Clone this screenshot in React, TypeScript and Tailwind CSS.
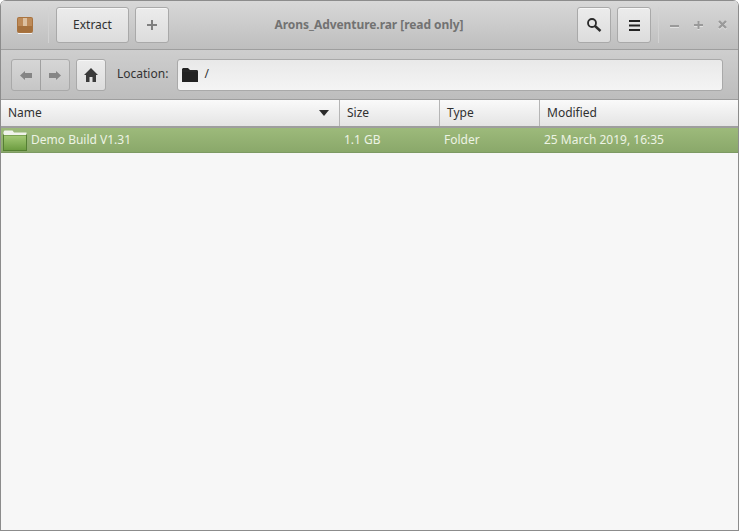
import React from 'react';

const font = { fontFamily: '"Noto Sans", sans-serif' };

const columns = [
  { label: 'Size', width: 'w-[100px]' },
  { label: 'Type', width: 'w-[100px]' },
  { label: 'Modified', width: 'flex-1' },
];

const btn =
  'flex items-center justify-center rounded-[3px] border border-[#a9a9a9] bg-gradient-to-b from-[#ececec] to-[#dcdcdc] shadow-[inset_0_1px_0_#f6f6f6]';

const ArchiveIcon = () => (
  <svg width="16" height="17" viewBox="0 0 16 17">
    <rect x="0" y="0" width="16" height="16" rx="2" fill="#a9733f" />
    <rect x="1" y="1" width="14" height="14" rx="1" fill="#bd8a58" />
    <rect x="1" y="9" width="14" height="6" fill="#a5703c" />
    <rect x="6" y="1" width="4" height="8" fill="#dcc0a0" />
    <rect x="1" y="16" width="14" height="1" fill="#f2f2f2" />
  </svg>
);

const FolderIcon = ({ fill }: { fill: string }) => (
  <svg width="16" height="14" viewBox="0 0 16 14">
    <path d="M0 1 1 0h5l2 2h7l1 1v11H0z" fill={fill} />
    <path d="M0 3h16" stroke="#3a3a3a" strokeWidth="0.500" />
  </svg>
);

const GreenFolder = () => (
  <svg width="24" height="21" viewBox="0 0 24 21">
    <defs>
      <linearGradient id="fg" x1="0" y1="0" x2="0" y2="1">
        <stop offset="0" stopColor="#a6cb78" />
        <stop offset="1" stopColor="#6b9b3f" />
      </linearGradient>
    </defs>
    <path d="M0.500 2 1.500 .5h8L11 2.500h12.500V6H.5z" fill="#f1f3ec" />
    <rect x="0.500" y="5" width="23" height="15.500" fill="url(#fg)" stroke="#557f33" />
    <rect x="1" y="4" width="22" height="1" fill="#f1f3ec" />
  </svg>
);

const WindowGlyph = ({ d, width = 2 }: { d: string; width?: number }) => (
  <svg width="10" height="11" viewBox="0 0 10 11" fill="none" strokeWidth={width}>
    <path d={d} transform="translate(0 1)" stroke="#e2e2e2" />
    <path d={d} stroke="#9a9a9a" />
  </svg>
);

export default function App() {
  return (
    <div
      style={font}
      className="flex h-[531px] w-[739px] flex-col overflow-hidden rounded-t-[6px] border border-t-0 border-[#8c8c8c] bg-[#f7f7f7] text-[12px] text-[#303030]"
    >
      {/* title bar */}
      <div className="flex h-[50px] shrink-0 items-center border-b border-[#9e9e9e] border-t border-t-[#8c8c8c] bg-gradient-to-b from-[#d8d8d8] to-[#bebebe] pl-[16px] pr-[10px]">
        <ArchiveIcon />
        <div className="ml-[15px] h-[36px] w-px bg-[#d2d2d2]" />
        <button className={`${btn} ml-[7px] h-[36px] w-[73px]`}>Extract</button>
        <button className={`${btn} ml-[6px] h-[36px] w-[34px]`}>
          <svg width="12" height="12" viewBox="0 0 12 12">
            <path d="M5 1h2v4h4v2H7v4H5V7H1V5h4z" fill="#808080" />
          </svg>
        </button>
        <div className="flex-1 pb-[1px] pr-[8px] text-center text-[12px] font-bold tracking-[-0.06px] text-[#727272]">
          Arons_Adventure.rar [read only]
        </div>
        <button className={`${btn} h-[36px] w-[34px]`}>
          <svg width="16" height="16" viewBox="0 0 16 16" fill="none" stroke="#2b2b2b">
            <circle cx="6" cy="6" r="4" strokeWidth="1.800" />
            <path d="M9 9l5.500 5" strokeWidth="2.400" />
          </svg>
        </button>
        <button className={`${btn} ml-[6px] h-[36px] w-[34px]`}>
          <svg width="11" height="11" viewBox="0 0 11 11" fill="#232323">
            <rect width="11" height="2" />
            <rect y="4.500" width="11" height="2" />
            <rect y="9" width="11" height="2" />
          </svg>
        </button>
        <div className="ml-[7px] h-[36px] w-px bg-[#d2d2d2]" />
        <div className="ml-[11px] flex items-center gap-[14px]">
          <WindowGlyph d="M0 6h9" />
          <WindowGlyph d="M0 5h9M4.500 1v8" />
          <WindowGlyph d="M1 1l7 7M8 1 1 8" width={2.400} />
        </div>
      </div>

      {/* location toolbar */}
      <div className="flex h-[50px] shrink-0 items-center border-b border-[#9e9e9e] bg-gradient-to-b from-[#cecece] to-[#bdbdbd] pl-[10px] pr-[15px] pt-[1px]">
        <div className="flex h-[32px] w-[59px] rounded-[3px] border border-[#a9a9a9] bg-gradient-to-b from-[#d6d6d6] to-[#c6c6c6]">
          <div className="flex w-[29px] items-center justify-center border-r border-[#a0a0a0]">
            <svg width="12" height="9" viewBox="0 0 12 9"><path d="M0 4.500 5 0v2h7v5H5v2z" fill="#858585" /></svg>
          </div>
          <div className="flex flex-1 items-center justify-center">
            <svg width="12" height="9" viewBox="0 0 12 9"><path d="M12 4.500 7 0v2H0v5h7v2z" fill="#858585" /></svg>
          </div>
        </div>
        <button className={`${btn} ml-[6px] h-[32px] w-[30px]`}>
          <svg width="14" height="14" viewBox="0 0 14 14">
            <path d="M7 0 14 7h-2v7H8.500V9h-3v5H2V7H0z" fill="#3a3a3a" />
          </svg>
        </button>
        <span className="mb-[2px] ml-[11px] text-[12px] text-[#333]">Location:</span>
        <div className="ml-[9px] flex h-[32px] flex-1 items-center gap-[6px] rounded-[3px] border border-[#a9a9a9] bg-gradient-to-b from-[#e9e9e9] to-[#f4f4f4] pl-[4px]">
          <FolderIcon fill="#222222" />
          <span className="mb-[2px] text-[#303030]">/</span>
        </div>
      </div>

      {/* column headers */}
      <div className="flex h-[28px] shrink-0 border-b-2 border-[#9e9e9e] bg-gradient-to-b from-[#fafafa] to-[#e4e4e4]">
        <div className="flex w-[339px] items-center justify-between border-r border-[#b5b5b5] pl-[7px] pr-[10px]">
          <span>Name</span>
          <svg width="10" height="6" viewBox="0 0 10 6"><path d="M0 0h10L5 6z" fill="#2b2b2b" /></svg>
        </div>
        {columns.map((col) => (
          <div key={col.label} className={`flex items-center border-r border-[#b5b5b5] pl-[7px] last:border-r-0 ${col.width}`}>
            {col.label}
          </div>
        ))}
      </div>

      {/* file list */}
      <div className="flex h-[25px] shrink-0 items-center border-b border-[#7d9a63] bg-gradient-to-b from-[#9dba7b] to-[#8aa86a] text-[#edf3e4]">
        <div className="flex w-[339px] items-center gap-[4px] pl-[2px]">
          <GreenFolder />
          <span>Demo Build V1.31</span>
        </div>
        <div className="w-[100px] pl-[4px]">1.1 GB</div>
        <div className="w-[100px] pl-[4px]">Folder</div>
        <div className="pl-[4px]">25 March 2019, 16:35</div>
      </div>
    </div>
  );
}
